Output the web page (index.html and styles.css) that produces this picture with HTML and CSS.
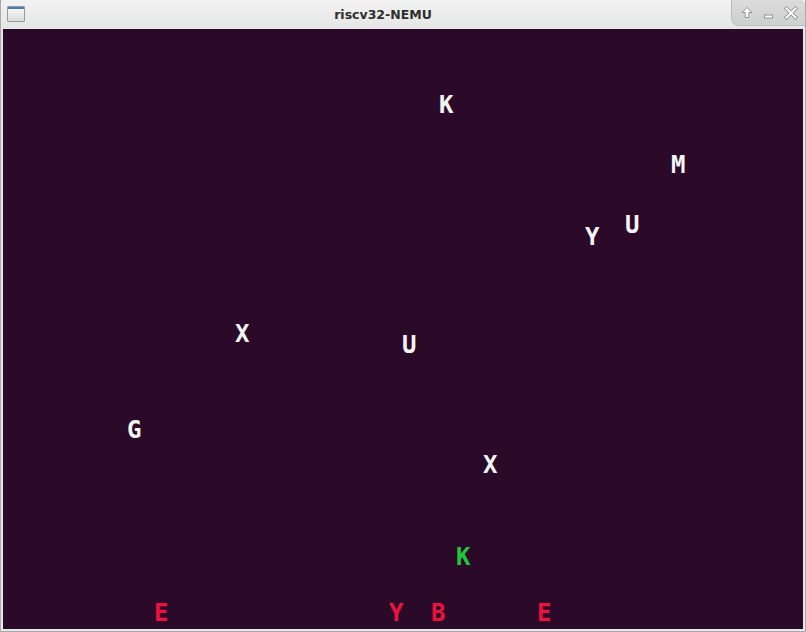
FILE: index.html
```html
<!DOCTYPE html>
<html>
<head>
<meta charset="utf-8">
<link rel="stylesheet" href="styles.css">
</head>
<body>
<div class="window">
  <div class="titlebar">
    <div class="app-icon"><div class="app-icon-bar"></div></div>
    <div class="title">riscv32-NEMU</div>
    <div class="buttons">
      <svg class="btn" width="14" height="14" viewBox="0 0 14 14"><path d="M7 1.5 L2 6.5 L5.2 6.5 L5.2 11.5 L8.8 11.5 L8.8 6.5 L12 6.5 Z" fill="#fff" stroke="#8a8a8a" stroke-width="0.9" stroke-linejoin="round"/></svg>
      <svg class="btn" width="12" height="14" viewBox="0 0 12 14"><rect x="1.5" y="9" width="8" height="3" fill="#fff" stroke="#8a8a8a" stroke-width="0.9"/></svg>
      <svg class="btn" width="14" height="14" viewBox="0 0 14 14"><path d="M2.5 2.5 L11.5 11.5 M11.5 2.5 L2.5 11.5" stroke="#8a8a8a" stroke-width="3.6" stroke-linecap="square"/><path d="M2.5 2.5 L11.5 11.5 M11.5 2.5 L2.5 11.5" stroke="#fff" stroke-width="2" stroke-linecap="square"/></svg>
    </div>
  </div>
  <div class="canvas">
    <span class="ch white" style="left:436px;top:64px">K</span>
    <span class="ch white" style="left:668px;top:124px">M</span>
    <span class="ch white" style="left:582px;top:196px">Y</span>
    <span class="ch white" style="left:622px;top:184px">U</span>
    <span class="ch white" style="left:232px;top:293px">X</span>
    <span class="ch white" style="left:399px;top:304px">U</span>
    <span class="ch white" style="left:124px;top:389px">G</span>
    <span class="ch white" style="left:480px;top:424px">X</span>
    <span class="ch green" style="left:453px;top:516px">K</span>
    <span class="ch red" style="left:151px;top:572px">E</span>
    <span class="ch red" style="left:386px;top:572px">Y</span>
    <span class="ch red" style="left:428px;top:572px">B</span>
    <span class="ch red" style="left:534px;top:572px">E</span>
  </div>
</div>
</body>
</html>
```
FILE: styles.css
```css
html, body {
  margin: 0;
  padding: 0;
  background: #ffffff;
}
.window {
  width: 806px;
  height: 632px;
  box-sizing: border-box;
  background: #e8e8e8;
  border: 1px solid #a9a9a9;
  border-top: none;
  display: flex;
  flex-direction: column;
  overflow: hidden;
}
.titlebar {
  height: 28px;
  flex: none;
  display: flex;
  align-items: center;
  position: relative;
  background: linear-gradient(#f2f2f2, #e6e6e6);
  border-top-left-radius: 4px;
}
.app-icon {
  width: 18px;
  height: 16px;
  margin-left: 6px;
  box-sizing: border-box;
  border: 1px solid #9a9a9a;
  border-radius: 1px;
  background: linear-gradient(#fafafa, #dcdcdc);
}
.app-icon-bar {
  height: 2px;
  background: #4a78c0;
}
.title {
  flex: 1;
  text-align: center;
  font-family: "DejaVu Sans", sans-serif;
  font-weight: bold;
  font-size: 12.5px;
  color: #2e2e2e;
  padding-left: 10px;
  padding-top: 1px;
}
.buttons {
  align-self: flex-start;
  height: 26px;
  width: 75px;
  box-sizing: border-box;
  display: flex;
  align-items: center;
  justify-content: space-between;
  padding: 1px 8px 0 8px;
  background: linear-gradient(#dcdcdc, #cfcfcf);
  border-left: 1px solid #bdbdbd;
  border-bottom: 1px solid #bdbdbd;
  border-bottom-left-radius: 8px;
  border-top-right-radius: 6px;
  margin-right: -1px;
}
.btn {
  display: block;
}
.canvas {
  position: relative;
  margin: 1px 2px 0 2px;
  width: 800px;
  height: 600px;
  flex: none;
  background: #2a0a28;
}
.ch {
  position: absolute;
  font-family: "DejaVu Sans Mono", monospace;
  font-weight: bold;
  font-size: 24px;
  line-height: 24px;
}
.white { color: #f4f4f4; }
.green { color: #1ec83a; }
.red { color: #ee1140; }
```
